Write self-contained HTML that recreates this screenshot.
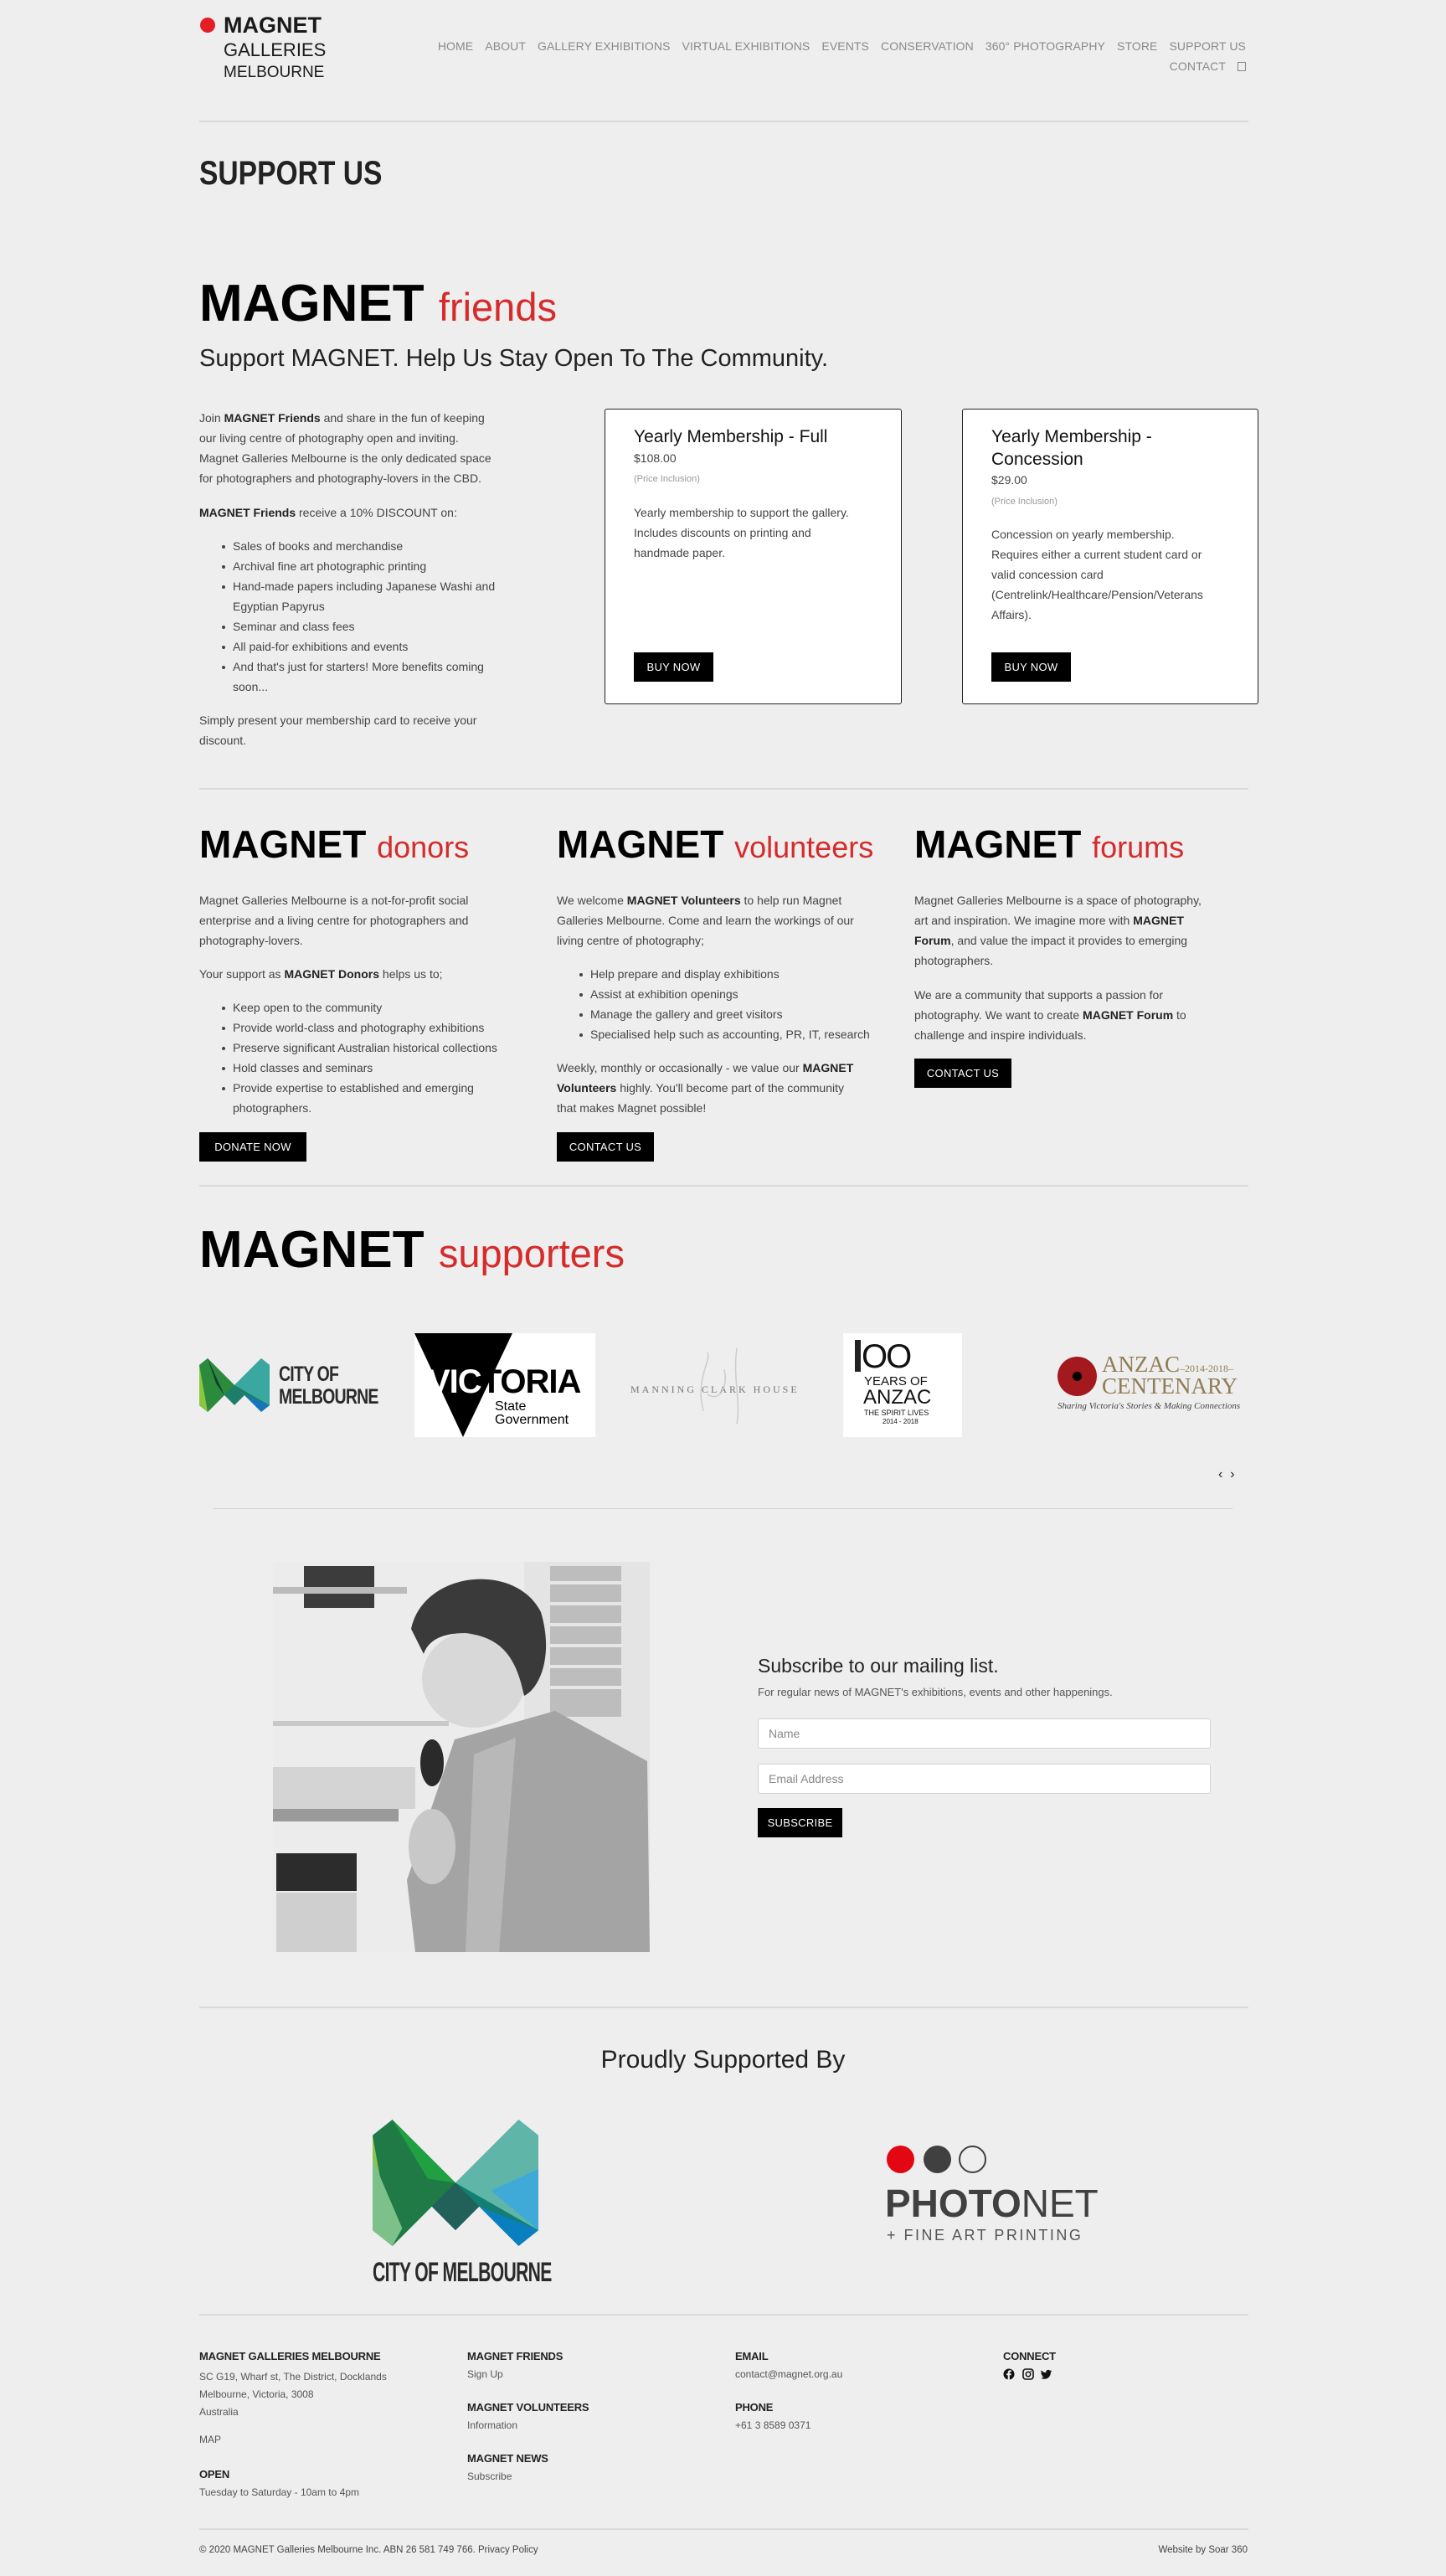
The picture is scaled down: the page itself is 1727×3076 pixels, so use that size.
<!DOCTYPE html>
<html><head><meta charset="utf-8">
<style>
*{margin:0;padding:0;box-sizing:border-box}
body{width:1727px;height:3076px;background:#eeeeee;font-family:"Liberation Sans",Arial,sans-serif;color:#333;position:relative;overflow:hidden}
.a{position:absolute;white-space:nowrap}
.t{font-size:14px;line-height:24px;color:#444}
.t b{color:#222}
.hr{position:absolute;height:2px;background:#dadada}
.btn{position:absolute;background:#000;color:#fff;font-size:13px;display:flex;align-items:center;justify-content:center;letter-spacing:.3px}
.nav{position:absolute;font-size:14px;color:#8a8a8a;letter-spacing:.1px}
.nav span{margin-left:14px}
.mg{font-weight:bold;color:#000}
.red{color:#d52b2b;font-weight:normal}
.card{position:absolute;background:#fff;border:1.5px solid #222;border-radius:3px}
ul{list-style:none}
li{position:relative;padding-left:40px}
li:before{content:"";position:absolute;left:27px;top:11px;width:4px;height:4px;background:#444;border-radius:50%}
.fh{font-size:13px;color:#222;font-weight:bold;letter-spacing:-.2px}
.ft{font-size:12px;color:#555}
</style></head><body>

<div class="a" style="left:239px;top:21px;width:18px;height:18px;border-radius:50%;background:#e31e24"></div>
<div class="a" style="left:267px;top:14px;font-size:27px;font-weight:bold;color:#1a1a1a;line-height:32px">MAGNET</div>
<div class="a" style="left:267px;top:46px;font-size:22px;color:#1a1a1a;line-height:28px">GALLERIES</div>
<div class="a" style="left:267px;top:75px;font-size:19px;color:#1a1a1a;line-height:24px">MELBOURNE</div>

<div class="nav" style="right:239px;top:47px;text-align:right">HOME<span>ABOUT</span><span>GALLERY EXHIBITIONS</span><span>VIRTUAL EXHIBITIONS</span><span>EVENTS</span><span>CONSERVATION</span><span>360° PHOTOGRAPHY</span><span>STORE</span><span>SUPPORT US</span></div>
<div class="nav" style="right:239px;top:71px">CONTACT<span style="display:inline-block;width:10px;height:11px;border:1.5px solid #888;vertical-align:-1px;margin-left:14px"></span></div>

<div class="hr" style="left:238px;width:1253px;top:144px"></div>

<div class="a" style="left:238px;top:182px;font-size:40px;line-height:50px;color:#222;font-weight:bold;transform:scaleX(.84);transform-origin:left">SUPPORT US</div>

<div class="a" style="left:238px;top:325px;font-size:62px;line-height:76px"><span class="mg">MAGNET</span> <span class="red" style="font-size:47px">friends</span></div>
<div class="a" style="left:238px;top:408px;font-size:29px;line-height:40px;color:#222">Support MAGNET. Help Us Stay Open To The Community.</div>

<div class="a t" style="left:238px;top:487px">Join <b>MAGNET Friends</b> and share in the fun of keeping<br>our living centre of photography open and inviting.<br>Magnet Galleries Melbourne is the only dedicated space<br>for photographers and photography-lovers in the CBD.</div>
<div class="a t" style="left:238px;top:600px"><b>MAGNET Friends</b> receive a 10% DISCOUNT on:</div>
<ul class="a t" style="left:238px;top:640px">
<li>Sales of books and merchandise</li>
<li>Archival fine art photographic printing</li>
<li>Hand-made papers including Japanese Washi and<br>Egyptian Papyrus</li>
<li>Seminar and class fees</li>
<li>All paid-for exhibitions and events</li>
<li>And that's just for starters! More benefits coming<br>soon...</li>
</ul>
<div class="a t" style="left:238px;top:848px">Simply present your membership card to receive your<br>discount.</div>

<div class="card" style="left:722px;top:488px;width:355px;height:353px"></div>
<div class="a" style="left:757px;top:508px;font-size:21px;color:#111;line-height:28px">Yearly Membership - Full</div>
<div class="a t" style="left:757px;top:535px">$108.00</div>
<div class="a" style="left:757px;top:566px;font-size:11px;color:#999">(Price Inclusion)</div>
<div class="a t" style="left:757px;top:600px">Yearly membership to support the gallery.<br>Includes discounts on printing and<br>handmade paper.</div>
<div class="btn" style="left:757px;top:779px;width:95px;height:35px">BUY NOW</div>

<div class="card" style="left:1149px;top:488px;width:354px;height:353px"></div>
<div class="a" style="left:1184px;top:508px;font-size:21px;color:#111;line-height:27px">Yearly Membership -<br>Concession</div>
<div class="a t" style="left:1184px;top:561px">$29.00</div>
<div class="a" style="left:1184px;top:593px;font-size:11px;color:#999">(Price Inclusion)</div>
<div class="a t" style="left:1184px;top:626px">Concession on yearly membership.<br>Requires either a current student card or<br>valid concession card<br>(Centrelink/Healthcare/Pension/Veterans<br>Affairs).</div>
<div class="btn" style="left:1184px;top:779px;width:95px;height:35px">BUY NOW</div>

<div class="hr" style="left:238px;width:1253px;top:941px"></div>

<div class="a" style="left:238px;top:980px;font-size:46px;line-height:56px"><span class="mg">MAGNET</span> <span class="red" style="font-size:36px">donors</span></div>
<div class="a" style="left:665px;top:980px;font-size:46px;line-height:56px"><span class="mg">MAGNET</span> <span class="red" style="font-size:36px">volunteers</span></div>
<div class="a" style="left:1092px;top:980px;font-size:46px;line-height:56px"><span class="mg">MAGNET</span> <span class="red" style="font-size:36px">forums</span></div>

<div class="a t" style="left:238px;top:1063px">Magnet Galleries Melbourne is a not-for-profit social<br>enterprise and a living centre for photographers and<br>photography-lovers.</div>
<div class="a t" style="left:238px;top:1151px">Your support as <b>MAGNET Donors</b> helps us to;</div>
<ul class="a t" style="left:238px;top:1191px">
<li>Keep open to the community</li>
<li>Provide world-class and photography exhibitions</li>
<li>Preserve significant Australian historical collections</li>
<li>Hold classes and seminars</li>
<li>Provide expertise to established and emerging<br>photographers.</li>
</ul>
<div class="btn" style="left:238px;top:1352px;width:128px;height:35px">DONATE NOW</div>

<div class="a t" style="left:665px;top:1063px">We welcome <b>MAGNET Volunteers</b> to help run Magnet<br>Galleries Melbourne. Come and learn the workings of our<br>living centre of photography;</div>
<ul class="a t" style="left:665px;top:1151px">
<li>Help prepare and display exhibitions</li>
<li>Assist at exhibition openings</li>
<li>Manage the gallery and greet visitors</li>
<li>Specialised help such as accounting, PR, IT, research</li>
</ul>
<div class="a t" style="left:665px;top:1263px">Weekly, monthly or occasionally - we value our <b>MAGNET</b><br><b>Volunteers</b> highly. You'll become part of the community<br>that makes Magnet possible!</div>
<div class="btn" style="left:665px;top:1352px;width:116px;height:35px">CONTACT US</div>

<div class="a t" style="left:1092px;top:1063px">Magnet Galleries Melbourne is a space of photography,<br>art and inspiration. We imagine more with <b>MAGNET</b><br><b>Forum</b>, and value the impact it provides to emerging<br>photographers.</div>
<div class="a t" style="left:1092px;top:1176px">We are a community that supports a passion for<br>photography. We want to create <b>MAGNET Forum</b> to<br>challenge and inspire individuals.</div>
<div class="btn" style="left:1092px;top:1264px;width:116px;height:35px">CONTACT US</div>

<div class="hr" style="left:238px;width:1253px;top:1415px"></div>

<div class="a" style="left:238px;top:1455px;font-size:62px;line-height:76px"><span class="mg">MAGNET</span> <span class="red" style="font-size:47px">supporters</span></div>

<svg class="a" style="left:238px;top:1622px" width="84" height="64" viewBox="0 0 84 64">
<polygon points="0,8 10,0 42,32 74,0 84,8 84,56 74,64 54,44 42,56 30,44 10,64 0,56" fill="#1e7e6a"/>
<polygon points="0,8 10,0 42,32 30,44 10,64 0,56" fill="#2c8a3d"/>
<polygon points="0,8 10,64 0,56" fill="#8cc63f"/>
<polygon points="42,32 74,0 84,8 84,56" fill="#3aa7a0"/>
<polygon points="54,44 84,56 74,64" fill="#1576bd"/>
<polygon points="10,0 30,44 20,30" fill="#123f2f"/>
</svg>
<div class="a" style="left:333px;top:1628px;font-size:25px;font-weight:bold;color:#2a2a2a;line-height:27px;letter-spacing:-1px;transform:scaleX(.78);transform-origin:left">CITY OF<br>MELBOURNE</div>

<div class="a" style="left:495px;top:1592px;width:216px;height:124px;background:#fff;overflow:hidden">
<svg class="a" style="left:0;top:0" width="216" height="124"><polygon points="0,0 117,0 58,124" fill="#000"/></svg>
<div class="a" style="left:16px;top:36px;font-size:40px;font-weight:bold;line-height:44px;letter-spacing:-1px"><span style="color:#fff">VIC</span><span style="color:#000">TORIA</span></div>
<div class="a" style="left:96px;top:80px;font-size:16px;line-height:16px;color:#000">State<br>Government</div>
</div>

<div class="a" style="left:753px;top:1652px;font-size:12px;color:#777;letter-spacing:3px;font-family:'Liberation Serif',serif">MANNING CLARK HOUSE</div>
<svg class="a" style="left:820px;top:1605px" width="90" height="100"><path d="M20 80 C10 40 30 20 25 10 M25 60 C40 70 50 50 45 30 M60 5 C55 40 65 70 60 95" stroke="#ccc" fill="none" stroke-width="1.5"/></svg>

<div class="a" style="left:1007px;top:1592px;width:142px;height:124px;background:#fff">
<div class="a" style="left:14px;top:8px;width:7px;height:38px;background:#222"></div>
<div class="a" style="left:22px;top:6px;font-size:40px;line-height:44px;color:#111;letter-spacing:-2px">OO</div>
<div class="a" style="left:25px;top:50px;font-size:15px;line-height:16px;color:#111">YEARS OF</div>
<div class="a" style="left:24px;top:64px;font-size:24px;line-height:26px;color:#111">ANZAC</div>
<div class="a" style="left:25px;top:90px;font-size:9px;line-height:10px;color:#111">THE SPIRIT LIVES</div>
<div class="a" style="left:47px;top:101px;font-size:8px;line-height:10px;color:#111">2014 - 2018</div>
</div>

<div class="a" style="left:1263px;top:1620px;width:47px;height:47px;border-radius:50%;background:#a3191d"></div>
<div class="a" style="left:1281px;top:1638px;width:11px;height:11px;border-radius:50%;background:#000"></div>
<div class="a" style="left:1316px;top:1615px;font-family:'Liberation Serif',serif;font-size:27px;color:#8f7d55;line-height:28px">ANZAC<span style="font-size:12px">–2014-2018–</span></div>
<div class="a" style="left:1316px;top:1641px;font-family:'Liberation Serif',serif;font-size:27px;color:#8f7d55;line-height:28px">CENTENARY</div>
<div class="a" style="left:1263px;top:1673px;font-family:'Liberation Serif',serif;font-style:italic;font-size:11px;color:#444">Sharing Victoria's Stories &amp; Making Connections</div>

<div class="a" style="left:1455px;top:1752px;font-size:16px;color:#222">‹&nbsp;&nbsp;›</div>

<div class="hr" style="left:255px;width:1217px;top:1801px;height:1px;background:#d0d0d0"></div>

<svg class="a" style="left:326px;top:1865px" width="450" height="466" viewBox="0 0 450 466">
<rect width="450" height="466" fill="#e4e4e4"/>
<rect x="0" y="0" width="300" height="466" fill="#ececec"/>
<rect x="37" y="5" width="84" height="50" fill="#3c3c3c"/>
<rect x="0" y="30" width="160" height="8" fill="#bbb"/>
<rect x="0" y="190" width="210" height="6" fill="#c8c8c8"/>
<rect x="0" y="245" width="170" height="50" fill="#d4d4d4"/>
<rect x="0" y="295" width="150" height="15" fill="#9a9a9a"/>
<rect x="4" y="348" width="96" height="45" fill="#2c2c2c"/>
<rect x="4" y="395" width="96" height="71" fill="#cfcfcf"/>
<rect x="331" y="5" width="85" height="180" fill="#bdbdbd"/>
<g stroke="#e6e6e6" stroke-width="4"><line x1="331" y1="25" x2="416" y2="25"/><line x1="331" y1="50" x2="416" y2="50"/><line x1="331" y1="75" x2="416" y2="75"/><line x1="331" y1="100" x2="416" y2="100"/><line x1="331" y1="125" x2="416" y2="125"/><line x1="331" y1="150" x2="416" y2="150"/></g>
<polygon points="217,212 337,178 447,238 450,466 170,466 160,380" fill="#a4a4a4"/>
<polygon points="240,230 290,210 270,466 230,466" fill="#b8b8b8"/>
<ellipse cx="240" cy="140" rx="62" ry="58" fill="#d8d8d8"/>
<path d="M165 80 C180 10 290 0 320 60 C335 110 320 150 300 160 C290 110 270 90 230 85 C200 85 185 95 180 110 Z" fill="#3a3a3a"/>
<ellipse cx="190" cy="240" rx="14" ry="28" fill="#2a2a2a"/>
<ellipse cx="190" cy="340" rx="28" ry="45" fill="#c8c8c8"/>
</svg>

<div class="a" style="left:905px;top:1974px;font-size:23px;color:#222;line-height:30px">Subscribe to our mailing list.</div>
<div class="a" style="left:905px;top:2013px;font-size:13px;color:#555">For regular news of MAGNET's exhibitions, events and other happenings.</div>
<div class="a" style="left:905px;top:2052px;width:541px;height:36px;background:#fff;border:1px solid #cfd3da;border-radius:3px;font-size:14px;color:#888;padding:9px 12px">Name</div>
<div class="a" style="left:905px;top:2106px;width:541px;height:36px;background:#fff;border:1px solid #cfd3da;border-radius:3px;font-size:14px;color:#888;padding:9px 12px">Email Address</div>
<div class="btn" style="left:905px;top:2159px;width:101px;height:35px">SUBSCRIBE</div>

<div class="hr" style="left:238px;width:1253px;top:2396px"></div>

<div class="a" style="left:0;width:1727px;text-align:center;top:2440px;font-size:30px;line-height:40px;color:#222">Proudly Supported By</div>

<svg class="a" style="left:445px;top:2530px" width="198" height="153" viewBox="0 0 84 64">
<polygon points="0,8 10,0 42,32 74,0 84,8 84,56 74,64 54,44 42,56 30,44 10,64 0,56" fill="#127f72"/>
<polygon points="0,8 10,0 42,32 30,44 10,64 0,56" fill="#1f7a45"/>
<polygon points="0,8 10,64 0,56" fill="#8cc34a"/>
<polygon points="10,0 42,32 28,30" fill="#20a040"/>
<polygon points="42,32 74,0 84,8 84,56" fill="#5fb6a8"/>
<polygon points="84,25 84,56 60,36" fill="#3fa9d8"/>
<polygon points="54,44 84,56 74,64" fill="#0a7fc0"/>
<polygon points="0,20 15,55 10,64 0,56" fill="#7ec08a"/>
<polygon points="30,44 42,32 54,44 42,56" fill="#22605a"/>
</svg>
<div class="a" style="left:445px;top:2696px;font-size:32px;font-weight:bold;color:#2a2a2a;line-height:34px;letter-spacing:-1px;transform:scaleX(.66);transform-origin:left">CITY OF MELBOURNE</div>

<div class="a" style="left:1059px;top:2562px;width:33px;height:33px;border-radius:50%;background:#e30613"></div>
<div class="a" style="left:1103px;top:2562px;width:33px;height:33px;border-radius:50%;background:#404040"></div>
<div class="a" style="left:1145px;top:2562px;width:33px;height:33px;border-radius:50%;border:2px solid #404040"></div>
<div class="a" style="left:1057px;top:2606px;font-size:46px;line-height:50px;color:#404040"><b>PHOTO</b>NET</div>
<div class="a" style="left:1059px;top:2659px;font-size:18px;line-height:20px;color:#555;letter-spacing:2.5px">+ FINE ART PRINTING</div>

<div class="hr" style="left:238px;width:1253px;top:2763px"></div>

<div class="a fh" style="left:238px;top:2806px">MAGNET GALLERIES MELBOURNE</div>
<div class="a ft" style="left:238px;top:2828px;line-height:21px">SC G19, Wharf st, The District, Docklands<br>Melbourne, Victoria, 3008<br>Australia</div>
<div class="a ft" style="left:238px;top:2906px">MAP</div>
<div class="a fh" style="left:238px;top:2947px">OPEN</div>
<div class="a ft" style="left:238px;top:2969px">Tuesday to Saturday - 10am to 4pm</div>

<div class="a fh" style="left:558px;top:2806px">MAGNET FRIENDS</div>
<div class="a ft" style="left:558px;top:2828px">Sign Up</div>
<div class="a fh" style="left:558px;top:2867px">MAGNET VOLUNTEERS</div>
<div class="a ft" style="left:558px;top:2889px">Information</div>
<div class="a fh" style="left:558px;top:2928px">MAGNET NEWS</div>
<div class="a ft" style="left:558px;top:2950px">Subscribe</div>

<div class="a fh" style="left:878px;top:2806px">EMAIL</div>
<div class="a ft" style="left:878px;top:2828px">contact@magnet.org.au</div>
<div class="a fh" style="left:878px;top:2867px">PHONE</div>
<div class="a ft" style="left:878px;top:2889px">+61 3 8589 0371</div>

<div class="a fh" style="left:1198px;top:2806px">CONNECT</div>
<svg class="a" style="left:1198px;top:2828px" width="64" height="14" viewBox="0 0 64 14">
<circle cx="7" cy="7" r="6.5" fill="#111"/><path d="M7.8 14V8.3h1.8l.3-2H7.8V5.2c0-.6.2-1 1-1h1.1V2.4c-.2 0-.8-.1-1.600-.1-1.6 0-2.6 1-2.6 2.7v1.3H4v2h1.7V14z" fill="#eee"/>
<rect x="24" y="1" width="12" height="12" rx="3" fill="none" stroke="#111" stroke-width="1.6"/><circle cx="30" cy="7" r="2.7" fill="none" stroke="#111" stroke-width="1.5"/><circle cx="33.4" cy="3.6" r=".8" fill="#111"/>
<path d="M58 3.2c-.5.2-1 .4-1.6.4.6-.3 1-.9 1.2-1.5-.5.3-1.1.6-1.700.7-.5-.6-1.2-.9-2-.9-1.5 0-2.7 1.2-2.7 2.7 0 .2 0 .4.1.6-2.3-.1-4.3-1.2-5.6-2.800-.2.4-.4.9-.4 1.4 0 .9.5 1.8 1.2 2.2-.4 0-.9-.1-1.2-.3 0 1.3.9 2.4 2.2 2.7-.4.1-.8.2-1.2.1.3 1.1 1.3 1.9 2.5 1.9-.9.7-2.1 1.2-3.4 1.2H45c1.2.8 2.6 1.2 4.2 1.2 5 0 7.7-4.1 7.7-7.7v-.4c.5-.4 1-.9 1.3-1.5z" fill="#111"/>
</svg>

<div class="hr" style="left:238px;width:1253px;top:3019px"></div>
<div class="a ft" style="left:238px;top:3039px;font-size:11.5px;color:#444">© 2020 MAGNET Galleries Melbourne Inc. ABN 26 581 749 766. Privacy Policy</div>
<div class="a ft" style="right:237px;top:3039px;font-size:11.5px;color:#444">Website by Soar 360</div>

</body></html>
